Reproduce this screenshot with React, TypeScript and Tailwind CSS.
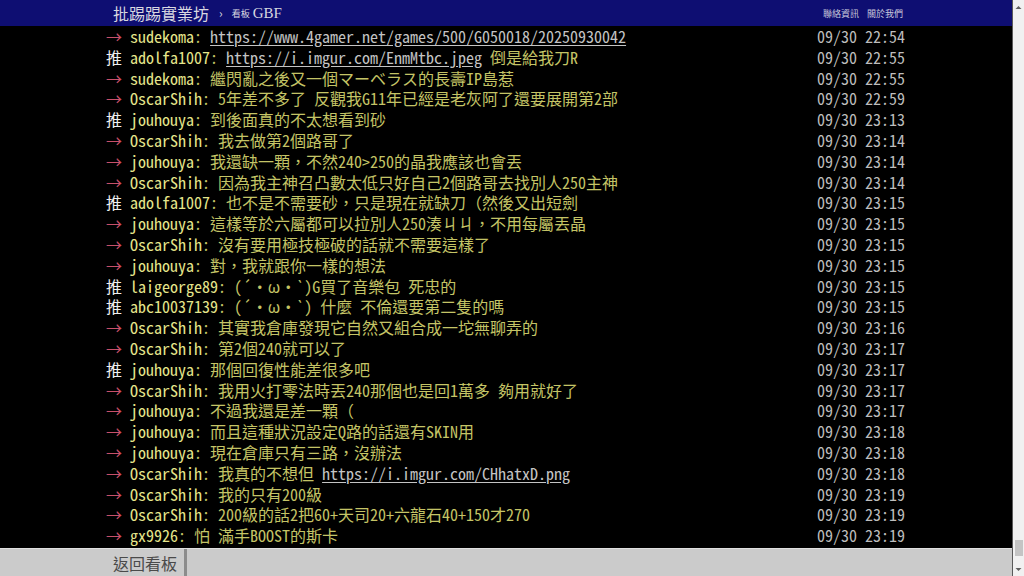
import React from 'react';

type Push = {
  tag: '推' | '→';
  user: string;
  parts: (string | { href: string })[];
  time: string;
};

const pushes: Push[] = [
  { tag: '→', user: 'sudekoma', parts: [{ href: 'https://www.4gamer.net/games/500/G050018/20250930042' }], time: '09/30 22:54' },
  { tag: '推', user: 'adolfa1007', parts: [{ href: 'https://i.imgur.com/EnmMtbc.jpeg' }, ' 倒是給我刀R'], time: '09/30 22:55' },
  { tag: '→', user: 'sudekoma', parts: ['繼閃亂之後又一個マーベラス的長壽IP島惹'], time: '09/30 22:55' },
  { tag: '→', user: 'OscarShih', parts: ['5年差不多了 反觀我G11年已經是老灰阿了還要展開第2部'], time: '09/30 22:59' },
  { tag: '推', user: 'jouhouya', parts: ['到後面真的不太想看到砂'], time: '09/30 23:13' },
  { tag: '→', user: 'OscarShih', parts: ['我去做第2個路哥了'], time: '09/30 23:14' },
  { tag: '→', user: 'jouhouya', parts: ['我還缺一顆，不然240>250的晶我應該也會丟'], time: '09/30 23:14' },
  { tag: '→', user: 'OscarShih', parts: ['因為我主神召凸數太低只好自己2個路哥去找別人250主神'], time: '09/30 23:14' },
  { tag: '推', user: 'adolfa1007', parts: ['也不是不需要砂，只是現在就缺刀（然後又出短劍'], time: '09/30 23:15' },
  { tag: '→', user: 'jouhouya', parts: ['這樣等於六屬都可以拉別人250湊ㄐㄐ，不用每屬丟晶'], time: '09/30 23:15' },
  { tag: '→', user: 'OscarShih', parts: ['沒有要用極技極破的話就不需要這樣了'], time: '09/30 23:15' },
  { tag: '→', user: 'jouhouya', parts: ['對，我就跟你一樣的想法'], time: '09/30 23:15' },
  { tag: '推', user: 'laigeorge89', parts: ['(´・ω・`)G買了音樂包 死忠的'], time: '09/30 23:15' },
  { tag: '推', user: 'abc10037139', parts: ['(´・ω・`) 什麼 不倫還要第二隻的嗎'], time: '09/30 23:15' },
  { tag: '→', user: 'OscarShih', parts: ['其實我倉庫發現它自然又組合成一坨無聊弄的'], time: '09/30 23:16' },
  { tag: '→', user: 'OscarShih', parts: ['第2個240就可以了'], time: '09/30 23:17' },
  { tag: '推', user: 'jouhouya', parts: ['那個回復性能差很多吧'], time: '09/30 23:17' },
  { tag: '→', user: 'OscarShih', parts: ['我用火打零法時丟240那個也是回1萬多 夠用就好了'], time: '09/30 23:17' },
  { tag: '→', user: 'jouhouya', parts: ['不過我還是差一顆（'], time: '09/30 23:17' },
  { tag: '→', user: 'jouhouya', parts: ['而且這種狀況設定Q路的話還有SKIN用'], time: '09/30 23:18' },
  { tag: '→', user: 'jouhouya', parts: ['現在倉庫只有三路，沒辦法'], time: '09/30 23:18' },
  { tag: '→', user: 'OscarShih', parts: ['我真的不想但 ', { href: 'https://i.imgur.com/CHhatxD.png' }], time: '09/30 23:18' },
  { tag: '→', user: 'OscarShih', parts: ['我的只有200級'], time: '09/30 23:19' },
  { tag: '→', user: 'OscarShih', parts: ['200級的話2把60+天司20+六龍石40+150才270'], time: '09/30 23:19' },
  { tag: '→', user: 'gx9926', parts: ['怕 滿手BOOST的斯卡'], time: '09/30 23:19' },
];

export default function App() {
  return (
    <div className="flex h-[576px] w-[1024px] overflow-hidden bg-black">
      <div className="flex flex-1 flex-col">
        {/* Top bar */}
        <div className="h-[26px] bg-[#0e0e72]">
          <div className="mx-auto flex h-full w-[800px] items-center pl-[7px] font-['Noto_Sans_CJK_TC',sans-serif] text-[#d8d8e0]">
            <span className="text-[16px] leading-none">批踢踢實業坊</span>
            <span className="ml-[10px] text-[12px] leading-none">›</span>
            <span className="ml-[9px] text-[9px] leading-none">看板</span>
            <span className="ml-[3px] font-['Liberation_Serif',serif] text-[15px] leading-none">GBF</span>
            <div className="ml-auto mr-[3px] flex gap-[8px] text-[9px] leading-none text-[#c8c8dc]">
              <span>聯絡資訊</span>
              <span>關於我們</span>
            </div>
          </div>
        </div>

        {/* Push list */}
        <div className="flex-1 overflow-hidden">
          <div className="mx-auto w-[800px] font-['Noto_Sans_Mono_CJK_TC','Noto_Sans_CJK_TC',monospace] text-[16px] leading-[20.8px]">
            {pushes.map((p, i) => (
              <div key={i} className="flex h-[20.8px] whitespace-pre">
                <span className={p.tag === '推' ? 'text-[#f0f0f0]' : 'text-[#c8506a]'}>{p.tag + ' '}</span>
                <span className="text-[#e6e68c]">{p.user}</span>
                <span className="text-[#c4c466]">
                  {': '}
                  {p.parts.map((part, j) =>
                    typeof part === 'string' ? (
                      <span key={j}>{part}</span>
                    ) : (
                      <span key={j} className="text-[#c4c4c4] underline underline-offset-2">
                        {part.href}
                      </span>
                    )
                  )}
                </span>
                <span className="ml-auto pr-[1px] text-[#bdbdbd]">{p.time}</span>
              </div>
            ))}
          </div>
        </div>

        {/* Bottom bar */}
        <div className="h-[28px] border-t border-[#e0e0e0] bg-[#cbcbcb]">
          <div className="mx-auto flex h-full w-[800px]">
            <div className="flex items-center border-r-[3px] border-[#8c8c8c] pl-[7px] pr-[7px] font-['Noto_Sans_CJK_TC',sans-serif] text-[16px] text-[#4a4a4a]">
              返回看板
            </div>
          </div>
        </div>
      </div>

      {/* Scrollbar */}
      <div className="flex w-[12px] flex-col items-center border-l border-[#5a5a5a] bg-[#f1f1f1]">
        <svg width="7" height="10" viewBox="0 0 7 10" className="mt-[3px]">
          <path d="M0.5 6 L3.5 3 L6.5 6 Z" fill="#606060" />
        </svg>
        <div className="flex-1" />
        <div className="mb-[8px] h-[16px] w-[8px] bg-[#c4c4c4]" />
        <svg width="7" height="10" viewBox="0 0 7 10" className="mb-[2px]">
          <path d="M0.5 4 L3.5 7 L6.5 4 Z" fill="#606060" />
        </svg>
      </div>
    </div>
  );
}
